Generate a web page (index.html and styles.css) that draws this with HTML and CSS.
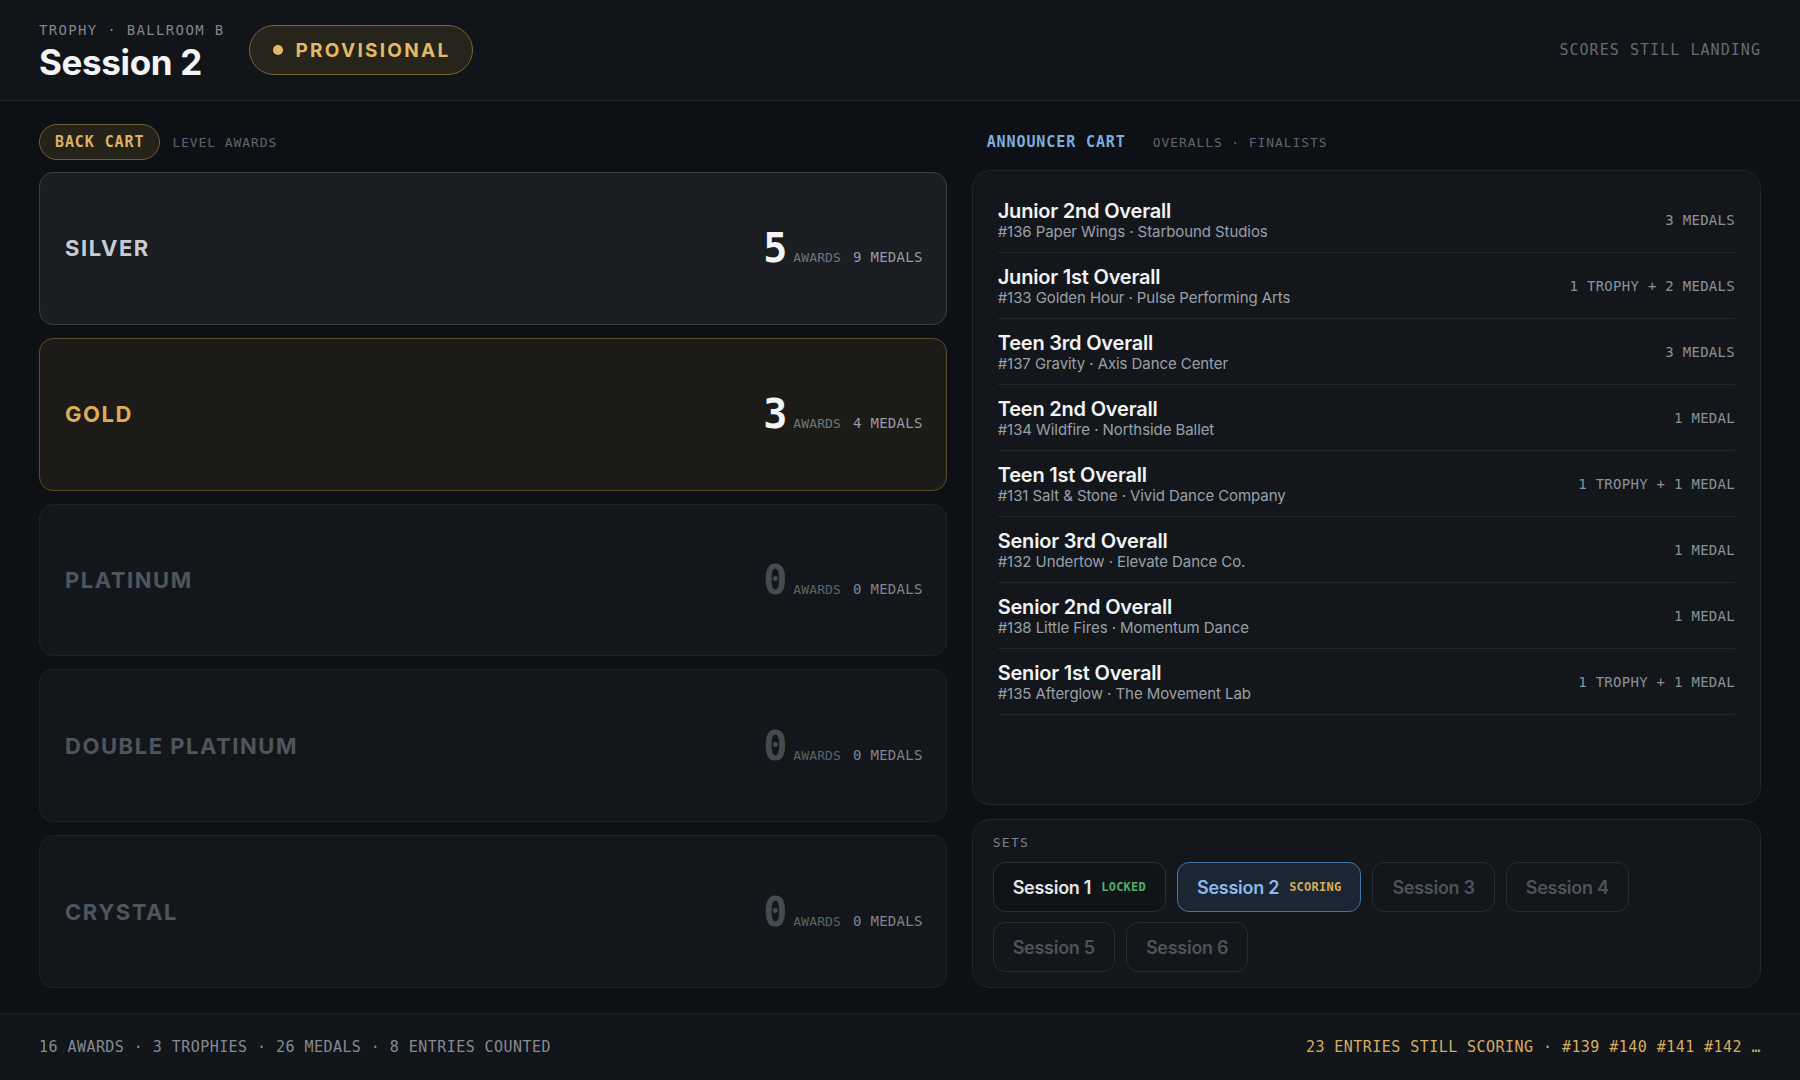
FILE: index.html
```html
<!DOCTYPE html>
<html lang="en">
<head>
<meta charset="utf-8">
<title>Session 2 — Trophy</title>
<link rel="stylesheet" href="styles.css">
</head>
<body>
<div class="app">
  <header class="topbar">
    <div class="title-group">
      <div class="title-block">
        <div class="eyebrow">TROPHY · BALLROOM B</div>
        <h1 class="title">Session 2</h1>
      </div>
      <div class="status-badge"><span class="dot"></span>PROVISIONAL</div>
    </div>
    <div class="status-note">SCORES STILL LANDING</div>
  </header>

  <main class="board">
    <section class="col">
      <div class="tabs">
        <span class="pill">BACK CART</span>
        <span class="tab-sub tab-sub-left">LEVEL AWARDS</span>
      </div>
      <div class="levels">
        <div class="level level-silver">
          <span class="level-name">SILVER</span>
          <span class="level-stats"><span class="big">5</span><span class="unit">AWARDS</span><span class="medals">9 MEDALS</span></span>
        </div>
        <div class="level level-gold">
          <span class="level-name">GOLD</span>
          <span class="level-stats"><span class="big">3</span><span class="unit">AWARDS</span><span class="medals">4 MEDALS</span></span>
        </div>
        <div class="level level-empty">
          <span class="level-name">PLATINUM</span>
          <span class="level-stats"><span class="big">0</span><span class="unit">AWARDS</span><span class="medals">0 MEDALS</span></span>
        </div>
        <div class="level level-empty">
          <span class="level-name">DOUBLE PLATINUM</span>
          <span class="level-stats"><span class="big">0</span><span class="unit">AWARDS</span><span class="medals">0 MEDALS</span></span>
        </div>
        <div class="level level-empty">
          <span class="level-name">CRYSTAL</span>
          <span class="level-stats"><span class="big">0</span><span class="unit">AWARDS</span><span class="medals">0 MEDALS</span></span>
        </div>
      </div>
    </section>

    <section class="col">
      <div class="tabs tabs-right">
        <span class="tab-active">ANNOUNCER CART</span>
        <span class="tab-sub tab-sub-right">OVERALLS · FINALISTS</span>
      </div>
      <div class="overalls">
        <div class="row">
          <div class="row-main"><div class="row-title">Junior 2nd Overall</div><div class="row-sub">#136 Paper Wings · Starbound Studios</div></div>
          <div class="row-prize">3 MEDALS</div>
        </div>
        <div class="row">
          <div class="row-main"><div class="row-title">Junior 1st Overall</div><div class="row-sub">#133 Golden Hour · Pulse Performing Arts</div></div>
          <div class="row-prize">1 TROPHY + 2 MEDALS</div>
        </div>
        <div class="row">
          <div class="row-main"><div class="row-title">Teen 3rd Overall</div><div class="row-sub">#137 Gravity · Axis Dance Center</div></div>
          <div class="row-prize">3 MEDALS</div>
        </div>
        <div class="row">
          <div class="row-main"><div class="row-title">Teen 2nd Overall</div><div class="row-sub">#134 Wildfire · Northside Ballet</div></div>
          <div class="row-prize">1 MEDAL</div>
        </div>
        <div class="row">
          <div class="row-main"><div class="row-title">Teen 1st Overall</div><div class="row-sub">#131 Salt &amp; Stone · Vivid Dance Company</div></div>
          <div class="row-prize">1 TROPHY + 1 MEDAL</div>
        </div>
        <div class="row">
          <div class="row-main"><div class="row-title">Senior 3rd Overall</div><div class="row-sub">#132 Undertow · Elevate Dance Co.</div></div>
          <div class="row-prize">1 MEDAL</div>
        </div>
        <div class="row">
          <div class="row-main"><div class="row-title">Senior 2nd Overall</div><div class="row-sub">#138 Little Fires · Momentum Dance</div></div>
          <div class="row-prize">1 MEDAL</div>
        </div>
        <div class="row">
          <div class="row-main"><div class="row-title">Senior 1st Overall</div><div class="row-sub">#135 Afterglow · The Movement Lab</div></div>
          <div class="row-prize">1 TROPHY + 1 MEDAL</div>
        </div>
      </div>

      <div class="sets">
        <div class="sets-label">SETS</div>
        <div class="sets-grid">
          <div class="set set-locked">Session 1<span class="set-tag tag-locked">LOCKED</span></div>
          <div class="set set-current">Session 2<span class="set-tag tag-scoring">SCORING</span></div>
          <div class="set set-idle">Session 3</div>
          <div class="set set-idle">Session 4</div>
          <div class="set set-idle">Session 5</div>
          <div class="set set-idle">Session 6</div>
        </div>
      </div>
    </section>
  </main>

  <footer class="footer">
    <div class="foot-left">16 AWARDS · 3 TROPHIES · 26 MEDALS · 8 ENTRIES COUNTED</div>
    <div class="foot-right">23 ENTRIES STILL SCORING · #139 #140 #141 #142 …</div>
  </footer>
</div>
</body>
</html>
```

FILE: styles.css
```css
* { box-sizing: border-box; }

html, body {
  margin: 0;
  padding: 0;
}

body {
  background: #0d1014;
  color: #e8eaed;
  font-family: Inter, "Noto Sans", "Liberation Sans", sans-serif;
}

.app {
  width: 1800px;
  height: 1080px;
  display: flex;
  flex-direction: column;
}

/* ---------- header ---------- */
.topbar {
  height: 101px;
  flex: none;
  display: flex;
  align-items: center;
  justify-content: space-between;
  padding: 0 39px;
  background: #111418;
  border-bottom: 1px solid #1f2328;
}

.title-group {
  display: flex;
  align-items: center;
  gap: 25px;
}

.title-block {
  display: flex;
  flex-direction: column;
  gap: 4px;
  padding-top: 3px;
}

.eyebrow {
  font-family: "DejaVu Sans Mono", "Liberation Mono", monospace;
  font-size: 14px;
  line-height: 16px;
  letter-spacing: 0.095em;
  color: #80868e;
}

.title {
  margin: 0;
  font-size: 35px;
  line-height: 40px;
  font-weight: 700;
  letter-spacing: -0.01em;
  color: #f2f4f6;
}

.status-badge {
  height: 50px;
  display: flex;
  align-items: center;
  gap: 12px;
  padding: 0 21px 0 23px;
  border: 1.5px solid #7b6536;
  border-radius: 25px;
  background: #27241b;
  color: #e3b965;
  font-size: 19px;
  font-weight: 700;
  letter-spacing: 0.12em;
}

.status-badge .dot {
  width: 10px;
  height: 10px;
  border-radius: 50%;
  background: #e3b965;
}

.status-note {
  font-family: "DejaVu Sans Mono", "Liberation Mono", monospace;
  font-size: 15px;
  letter-spacing: 0.07em;
  color: #656b73;
}

/* ---------- board ---------- */
.board {
  flex: 1;
  min-height: 0;
  display: grid;
  grid-template-columns: 1.15fr 1fr;
  gap: 25px;
  padding: 23px 39px 25px;
}

.col {
  display: flex;
  flex-direction: column;
  min-height: 0;
}

.tabs {
  height: 36px;
  flex: none;
  display: flex;
  align-items: center;
  margin-bottom: 12px;
}

.tabs-right {
  padding-left: 15px;
  margin-bottom: 10px;
}

.pill {
  height: 36px;
  display: flex;
  align-items: center;
  padding: 0 15px;
  border: 1.5px solid #735f35;
  border-radius: 18px;
  background: #25221a;
  color: #ddb264;
  font-family: "DejaVu Sans Mono", "Liberation Mono", monospace;
  font-size: 15px;
  font-weight: 700;
  letter-spacing: 0.06em;
}

.tab-sub {
  font-family: "DejaVu Sans Mono", "Liberation Mono", monospace;
  font-size: 13px;
  letter-spacing: 0.07em;
  color: #5f656c;
}

.tab-sub-left { margin-left: 12px; }
.tab-sub-right { margin-left: 27px; }

.tab-active {
  font-family: "DejaVu Sans Mono", "Liberation Mono", monospace;
  font-size: 15px;
  font-weight: 700;
  letter-spacing: 0.06em;
  color: #7eaedc;
}

/* ---------- level cards ---------- */
.levels {
  flex: 1;
  display: flex;
  flex-direction: column;
  gap: 13px;
}

.level {
  flex: 1;
  display: flex;
  align-items: center;
  justify-content: space-between;
  padding: 0 23px 0 25px;
  border-radius: 14px;
  border: 1px solid #1e2328;
  background: #13171b;
}

.level-silver {
  background: #1a1d21;
  border-color: #3b4047;
}

.level-gold {
  background: #1c1b18;
  border-color: #5c4d2a;
}

.level-name {
  font-size: 22px;
  font-weight: 700;
  letter-spacing: 0.07em;
  color: #4f555c;
}

.level-silver .level-name { color: #c7ccd3; }
.level-gold .level-name { color: #dcad56; }

.level-stats {
  display: flex;
  align-items: baseline;
  font-family: "DejaVu Sans Mono", "Liberation Mono", monospace;
}

.big {
  font-size: 40px;
  line-height: 1;
  font-weight: 700;
  color: #f2f4f6;
  margin-right: 6px;
}

.level-empty .big { color: #454b52; }

.unit {
  font-size: 13px;
  letter-spacing: 0.01em;
  color: #6f757d;
  margin-right: 12px;
}

.medals {
  font-size: 14px;
  letter-spacing: 0.02em;
  color: #969ca4;
}

.level-empty .unit { color: #5c6269; }
.level-empty .medals { color: #7f858c; }

/* ---------- overalls list ---------- */
.overalls {
  flex: 1;
  min-height: 0;
  display: flex;
  flex-direction: column;
  padding: 16px 25px;
  border: 1px solid #21262b;
  border-radius: 18px;
  background: #13171b;
}

.row {
  height: 66px;
  flex: none;
  display: flex;
  align-items: center;
  justify-content: space-between;
  border-bottom: 1px solid #22272c;
}

.row-main {
  display: flex;
  flex-direction: column;
}

.row-title {
  font-size: 20px;
  line-height: 24px;
  font-weight: 600;
  letter-spacing: -0.01em;
  color: #f1f3f5;
}

.row-sub {
  font-size: 15px;
  line-height: 18px;
  letter-spacing: -0.005em;
  color: #9aa0a8;
}

.row-prize {
  font-family: "DejaVu Sans Mono", "Liberation Mono", monospace;
  font-size: 14px;
  letter-spacing: 0.02em;
  color: #8b9199;
}

/* ---------- sets ---------- */
.sets {
  flex: none;
  margin-top: 14px;
  padding: 15px 20px 15px;
  border: 1px solid #21262b;
  border-radius: 18px;
  background: #13171b;
}

.sets-label {
  font-family: "DejaVu Sans Mono", "Liberation Mono", monospace;
  font-size: 13px;
  line-height: 16px;
  letter-spacing: 0.1em;
  color: #7a8088;
  margin-bottom: 11px;
}

.sets-grid {
  display: flex;
  flex-wrap: wrap;
  gap: 10px 11px;
}

.set {
  height: 50px;
  display: flex;
  align-items: center;
  gap: 10px;
  padding: 0 19px;
  border: 1px solid #262b31;
  border-radius: 12px;
  font-size: 18px;
  font-weight: 600;
  letter-spacing: -0.015em;
  color: #4d535a;
}

.set-locked {
  color: #e4e7ea;
  border-color: #2a2f35;
  background: #111417;
}

.set-current {
  color: #8bb9ea;
  border-color: #4675a8;
  background: #1b2533;
}

.set-tag {
  font-family: "DejaVu Sans Mono", "Liberation Mono", monospace;
  font-size: 12px;
  letter-spacing: 0.02em;
}

.tag-locked { color: #4fae6b; }
.tag-scoring { color: #d6ac5c; }

/* ---------- footer ---------- */
.footer {
  height: 67px;
  flex: none;
  display: flex;
  align-items: center;
  justify-content: space-between;
  padding: 0 39px;
  background: #121519;
  border-top: 1px solid #1f2328;
  font-family: "DejaVu Sans Mono", "Liberation Mono", monospace;
  font-size: 15px;
  letter-spacing: 0.03em;
}

.foot-left { color: #858b93; }
.foot-right { color: #d5ad62; }
```
